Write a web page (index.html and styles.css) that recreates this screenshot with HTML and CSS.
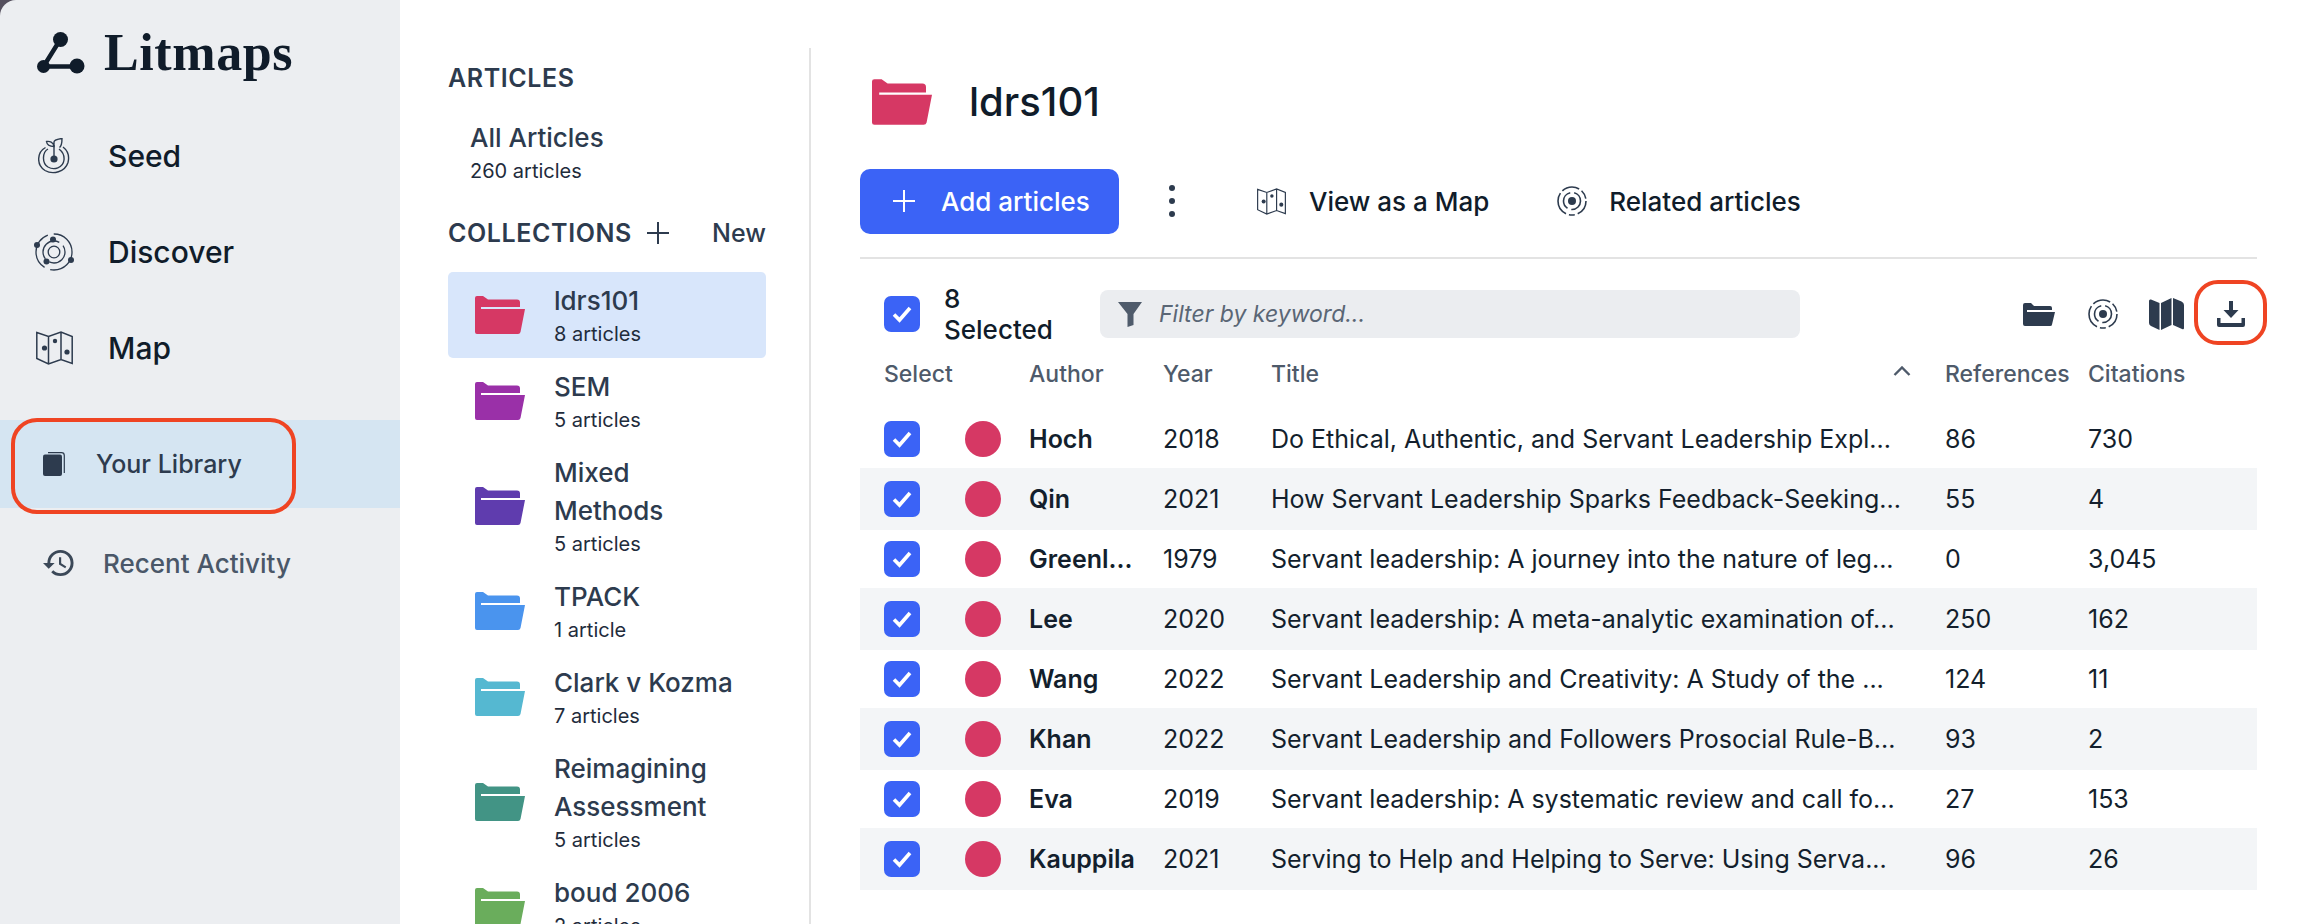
FILE: index.html
```html
<!DOCTYPE html>
<html lang="en">
<head>
<meta charset="utf-8">
<title>Litmaps</title>
<link rel="stylesheet" href="styles.css">
</head>
<body>
<svg class="defs" aria-hidden="true">
  <symbol id="folder" viewBox="0 0 50 38"><path d="M0 2Q0 0 2 0H8L13 3.5H42Q45 3.5 45 6.5V11H6V13H50L45.5 36Q45 38 43 38H2Q0 38 0 36Z"/></symbol>
  <symbol id="check" viewBox="0 0 36 36"><path d="M10 18.5l5.5 5.5L26 12" fill="none" stroke="#fff" stroke-width="3.6"/></symbol>
  <symbol id="related" viewBox="0 0 30 30"><circle cx="15" cy="15" r="4" fill="currentColor"/><circle cx="15" cy="15" r="8.5" fill="none" stroke="currentColor" stroke-width="1.6" stroke-dasharray="14 4 20 4"/><circle cx="15" cy="15" r="14" fill="none" stroke="currentColor" stroke-width="1.6" stroke-dasharray="16 3 6 3 24 3 18 3 9 3"/></symbol>
  <symbol id="map" viewBox="0 0 37 34"><path d="M.8 1.5 12.5 5.5 25 1l11.2 4.5v27L25 28.5l-12.5 4.5L.8 27.5ZM12.5 5.5V33M25 1v27.5" fill="none" stroke="currentColor" stroke-width="1.5"/><circle cx="8.5" cy="17" r="2.6" fill="currentColor"/><circle cx="19" cy="10" r="2.2" fill="currentColor"/><circle cx="31" cy="21" r="2.6" fill="currentColor"/></symbol>
</svg>
<div class="app">
  <aside class="sidebar">
    <div class="logo">
      <svg class="logo-icon" viewBox="0 0 48 42"><path d="M23 8 6.500 34.500H40" fill="none" stroke="currentColor" stroke-width="4.500"/><circle cx="23.500" cy="7.500" r="7.500"/><circle cx="6.500" cy="34.500" r="6.500"/><circle cx="40" cy="34" r="7.500"/></svg>
      <span class="logo-text">Litmaps</span>
    </div>
    <nav class="nav">
      <a class="nav-item"><span class="nav-ico"><svg class="ico-seed" viewBox="0 0 32 37"><circle cx="16" cy="21" r="3.600" fill="currentColor"/><path d="M16 21V8M10 12C4.500 15 3.500 26 10 30c6 3.500 15 1 16-7 .4-4-1-8-5-11M7.500 10.500C-1 15-2 28 7 33.500c8 4.500 20 1.500 23-8 1.500-6-.5-12-5-15.500" fill="none" stroke="currentColor" stroke-width="1.400" transform="translate(0 -1)"/><path d="M16 8.500C12 8.500 9 7 8.500 3.500c3-.5 7 .5 7.500 5ZM16 8V4c0-2 4-3 8-3.500 0 4-.5 7.500-2.500 9" fill="none" stroke="currentColor" stroke-width="1.400"/></svg></span>Seed</a>
      <a class="nav-item"><span class="nav-ico"><svg class="ico-discover" viewBox="0 0 40 38"><circle cx="20" cy="19" r="5.800" fill="none" stroke="currentColor" stroke-width="1.300"/><circle cx="20" cy="19" r="11" fill="none" stroke="currentColor" stroke-width="1.300" stroke-dasharray="22 5 30 5"/><circle cx="20" cy="19" r="18" fill="none" stroke="currentColor" stroke-width="1.300" stroke-dasharray="32 6 40 6 30 6"/><circle cx="19" cy="6.500" r="3" fill="currentColor"/><circle cx="3" cy="12" r="3" fill="currentColor"/><circle cx="37" cy="27" r="3" fill="currentColor"/><circle cx="12.500" cy="28.500" r="3" fill="currentColor"/></svg></span>Discover</a>
      <a class="nav-item"><span class="nav-ico"><svg class="ico-map" aria-hidden="true"><use href="#map"/></svg></span>Map</a>
    </nav>
    <a class="library"><svg class="ico-book" viewBox="0 0 22 24"><path d="M5 .7h13.500q2.800 0 2.800 2.800V21" fill="none" stroke="currentColor" stroke-width="1.200"/><path d="M2 2.500h15q2 0 2 2V22q0 2-2 2H2q-2 0-2-2V4.500q0-2 2-2Z"/></svg>Your Library</a>
    <a class="recent"><svg class="ico-history" viewBox="1 3 22 18"><path d="M13 3a9 9 0 0 0-9 9H1l3.890 3.890.07.140L9 12H6c0-3.870 3.130-7 7-7s7 3.130 7 7-3.130 7-7 7c-1.930 0-3.680-.790-4.940-2.060l-1.420 1.420A8.954 8.954 0 0 0 13 21a9 9 0 0 0 0-18zm-1 5v5l4.280 2.540.720-1.210-3.500-2.080V8H12z"/></svg>Recent Activity</a>
  </aside>

  <section class="collections">
    <h2 class="group-title">ARTICLES</h2>
    <div class="all">
      <div class="item-name">All Articles</div>
      <div class="item-sub">260 articles</div>
    </div>
    <div class="coll-head">
      <h2 class="group-title">COLLECTIONS</h2>
      <svg class="plus" viewBox="0 0 22 22"><path d="M11 0v22M0 11h22" fill="none" stroke="currentColor" stroke-width="2"/></svg>
      <span class="new">New</span>
    </div>
    <div class="coll-list">
      <a class="coll active"><svg class="coll-folder c-red"><use href="#folder"/></svg><div><div class="item-name">ldrs101</div><div class="item-sub">8 articles</div></div></a>
      <a class="coll"><svg class="coll-folder c-magenta"><use href="#folder"/></svg><div><div class="item-name">SEM</div><div class="item-sub">5 articles</div></div></a>
      <a class="coll"><svg class="coll-folder c-purple"><use href="#folder"/></svg><div><div class="item-name">Mixed<br>Methods</div><div class="item-sub">5 articles</div></div></a>
      <a class="coll"><svg class="coll-folder c-blue"><use href="#folder"/></svg><div><div class="item-name">TPACK</div><div class="item-sub">1 article</div></div></a>
      <a class="coll"><svg class="coll-folder c-cyan"><use href="#folder"/></svg><div><div class="item-name">Clark v Kozma</div><div class="item-sub">7 articles</div></div></a>
      <a class="coll"><svg class="coll-folder c-teal"><use href="#folder"/></svg><div><div class="item-name">Reimagining<br>Assessment</div><div class="item-sub">5 articles</div></div></a>
      <a class="coll"><svg class="coll-folder c-green"><use href="#folder"/></svg><div><div class="item-name">boud 2006</div><div class="item-sub">2 articles</div></div></a>
    </div>
  </section>

  <main class="main">
    <header class="title-row">
      <svg class="title-folder c-red"><use href="#folder"/></svg>
      <h1 class="title">ldrs101</h1>
    </header>
    <div class="actions">
      <button class="add"><svg class="add-plus" viewBox="0 0 22 22"><path d="M11 0v22M0 11h22" fill="none" stroke="currentColor" stroke-width="2"/></svg>Add articles</button>
      <span class="kebab"><i></i><i></i><i></i></span>
      <a class="action act-map"><svg class="act-ico-map"><use href="#map"/></svg>View as a Map</a>
      <a class="action act-rel"><svg class="act-ico"><use href="#related"/></svg>Related articles</a>
    </div>
    <div class="toolbar">
      <span class="cb"><svg><use href="#check"/></svg></span>
      <span class="selected">8 Selected</span>
      <div class="filter">
        <svg class="funnel" viewBox="0 0 24 25"><path d="M0 0h24L15.500 12v11l-6 2V12Z"/></svg>
        <span>Filter by keyword...</span>
      </div>
      <div class="tools">
        <svg class="tool-folder" viewBox="0 0 32 23"><path d="M0 2Q0 0 2 0H8L11 3H27Q29 3 29 5V7H4V9H32L29 21.500Q29 23 27 23H2Q0 23 0 21Z"/></svg>
        <svg class="tool-related"><use href="#related"/></svg>
        <svg class="tool-map" viewBox="0 0 35 32"><path d="M0 3Q0 1 2 1.500L10.500 5V32L2 28Q0 27 0 25ZM12 5 22.500 0V27L12 32ZM24 0 32.500 3.500Q35 4.500 35 7V30Q35 32 33 31L24 27Z"/></svg>
        <svg class="tool-dl" viewBox="0 0 28 26"><path d="M12 0h4v9h5.500l-7.500 8-7.500-8H12ZM0 17h3.500v5h21v-5H28v7q0 2-2 2H2q-2 0-2-2Z"/></svg>
      </div>
    </div>
    <div class="thead">
      <span>Select</span><span></span><span>Author</span><span>Year</span>
      <span class="th-title">Title<svg class="chev" viewBox="0 0 18 10"><path d="M1.500 9 9 1.500 16.500 9" fill="none" stroke="currentColor" stroke-width="2.400"/></svg></span>
      <span>References</span><span>Citations</span>
    </div>
    <div class="tbody">
      <div class="row"><span class="cb"><svg><use href="#check"/></svg></span><span class="dot"></span><b class="author">Hoch</b><span>2018</span><span>Do Ethical, Authentic, and Servant Leadership Expl...</span><span>86</span><span>730</span></div>
      <div class="row"><span class="cb"><svg><use href="#check"/></svg></span><span class="dot"></span><b class="author">Qin</b><span>2021</span><span>How Servant Leadership Sparks Feedback-Seeking...</span><span>55</span><span>4</span></div>
      <div class="row"><span class="cb"><svg><use href="#check"/></svg></span><span class="dot"></span><b class="author">Greenl...</b><span>1979</span><span>Servant leadership: A journey into the nature of leg...</span><span>0</span><span>3,045</span></div>
      <div class="row"><span class="cb"><svg><use href="#check"/></svg></span><span class="dot"></span><b class="author">Lee</b><span>2020</span><span>Servant leadership: A meta-analytic examination of...</span><span>250</span><span>162</span></div>
      <div class="row"><span class="cb"><svg><use href="#check"/></svg></span><span class="dot"></span><b class="author">Wang</b><span>2022</span><span>Servant Leadership and Creativity: A Study of the ...</span><span>124</span><span>11</span></div>
      <div class="row"><span class="cb"><svg><use href="#check"/></svg></span><span class="dot"></span><b class="author">Khan</b><span>2022</span><span>Servant Leadership and Followers Prosocial Rule-B...</span><span>93</span><span>2</span></div>
      <div class="row"><span class="cb"><svg><use href="#check"/></svg></span><span class="dot"></span><b class="author">Eva</b><span>2019</span><span>Servant leadership: A systematic review and call fo...</span><span>27</span><span>153</span></div>
      <div class="row"><span class="cb"><svg><use href="#check"/></svg></span><span class="dot"></span><b class="author">Kauppila</b><span>2021</span><span>Serving to Help and Helping to Serve: Using Serva...</span><span>96</span><span>26</span></div>
    </div>
  </main>
  <div class="mark mark-library"></div>
  <div class="mark mark-download"></div>
</div>
</body>
</html>
```
FILE: styles.css
```css
* { box-sizing: border-box; }
html, body { margin: 0; height: 100%; overflow: hidden; }
body { background: #55505e; font-family: Inter, "Liberation Sans", sans-serif; color: #101c2a; }
.defs { display: none; }
h1, h2 { margin: 0; font: inherit; }
svg { display: block; fill: currentColor; flex: none; }

.app { position: relative; display: flex; width: 2298px; height: 924px; overflow: hidden; background: #fff; }
.app::before { content: ""; position: absolute; left: 0; top: 0; width: 20px; height: 20px; background: #55505e; }

/* sidebar */
.sidebar { position: relative; width: 400px; flex: none; background: #eceef1; border-top-left-radius: 16px; padding-top: 30px; color: #101c2a; }
.logo { display: flex; align-items: center; gap: 19px; height: 46px; padding-left: 37px; color: #101c2a; }
.logo-icon { width: 48px; height: 42px; }
.logo-text { font-family: "Liberation Serif", serif; font-weight: 700; font-size: 52px; letter-spacing: .6px; line-height: 46px; }
.nav { margin-top: 32px; }
.nav-item { display: flex; align-items: center; height: 96px; font-size: 30px; font-weight: 500; }
.nav-ico { display: flex; justify-content: center; width: 108px; padding-right: 0; color: #2d3b4e; }
.ico-seed { width: 32px; height: 37px; }
.ico-discover { width: 40px; height: 38px; }
.ico-map { width: 37px; height: 34px; }
.library { display: flex; align-items: center; gap: 31px; height: 88px; margin-top: 24px; padding-left: 43px; background: #d5e5f2; color: #2d3b4e; font-size: 25px; font-weight: 500; }
.ico-book { width: 22px; height: 24px; }
.recent { display: flex; align-items: center; gap: 28px; height: 110px; padding-left: 43px; color: #4a5768; font-size: 26px; font-weight: 500; }
.ico-history { width: 32px; height: 30px; fill: #3b4858; }

/* collections */
.collections { width: 411px; flex: none; margin-top: 48px; padding: 15px 43px 0 48px; border-right: 2px solid #e3e3e3; color: #2d3b4e; }
.group-title { font-size: 25px; font-weight: 600; line-height: 30px; letter-spacing: .6px; }
.all { margin-top: 26px; padding-left: 22px; }
.item-name { font-size: 26px; font-weight: 500; line-height: 38px; color: #2d3b4e; }
.item-sub { font-size: 20px; line-height: 28px; color: #1f2c3c; }
.coll-head { display: flex; align-items: center; margin-top: 33px; }
.plus { width: 22px; height: 22px; margin-left: 15px; }
.new { margin-left: auto; font-size: 25px; font-weight: 500; line-height: 30px; }
.coll-list { margin-top: 24px; }
.coll { display: flex; align-items: center; gap: 29px; padding: 10px 0 10px 27px; border-radius: 5px; }
.coll.active { background: #d8e6fb; }
.coll-folder { width: 50px; height: 38px; }
.c-red { color: #d63864; }
.c-magenta { color: #9a30a8; }
.c-purple { color: #5f3cae; }
.c-blue { color: #4a94ee; }
.c-cyan { color: #55b8d1; }
.c-teal { color: #429485; }
.c-green { color: #6aad5c; }

/* main */
.main { width: 1397px; flex: none; margin-left: 49px; }
.title-row { display: flex; align-items: center; gap: 37px; height: 66px; margin-top: 69px; padding-left: 12px; }
.title-folder { width: 60px; height: 46px; }
.title { font-size: 40px; font-weight: 500; line-height: 66px; color: #101c2a; }
.actions { display: flex; align-items: center; height: 66px; margin-top: 33px; }
.add { display: flex; align-items: center; gap: 26px; width: 259px; height: 65px; padding: 0 0 0 33px; border: 0; border-radius: 10px; background: #3b63f6; color: #fff; font: 500 26px Inter, sans-serif; }
.add-plus { width: 22px; height: 22px; }
.kebab { display: flex; flex-direction: column; gap: 7px; margin-left: 50px; }
.kebab i { display: block; width: 6px; height: 6px; border-radius: 50%; background: #2d3b4e; }
.action { display: flex; align-items: center; font-size: 26px; font-weight: 500; color: #101c2a; }
.act-map { gap: 23px; margin-left: 82px; }
.act-rel { gap: 22px; margin-left: 68px; }
.act-ico-map { width: 29px; height: 27px; color: #2d3b4e; }
.act-ico { width: 30px; height: 30px; color: #2d3b4e; }
.toolbar { display: flex; align-items: center; gap: 24px; height: 80px; margin-top: 23px; padding: 32px 0 0 24px; border-top: 2px solid #e3e3e3; box-sizing: border-box; }
.cb { display: flex; width: 36px; height: 36px; border-radius: 7px; background: #3b63f6; }
.cb svg { width: 36px; height: 36px; }
.selected { width: 132px; font-size: 26px; font-weight: 500; }
.filter { display: flex; align-items: center; gap: 17px; width: 700px; height: 48px; padding-left: 18px; border-radius: 8px; background: #ebedf0; color: #5a6675; font-size: 23px; font-style: italic; }
.funnel { width: 24px; height: 25px; fill: #4f5b6b; }
.tools { display: flex; align-items: center; margin-left: auto; height: 48px; color: #2d3b4e; }
.tool-folder { width: 32px; height: 23px; margin-right: 33px; }
.tool-related { width: 30px; height: 30px; margin-right: 31px; }
.tool-map { width: 35px; height: 32px; margin-right: 33px; }
.tool-dl { width: 28px; height: 26px; margin-right: 12px; }
.thead, .row { display: grid; grid-template-columns: 81px 64px 134px 108px 674px 143px 1fr; align-items: center; padding-left: 24px; }
.thead { height: 40px; margin-top: 17px; margin-bottom: 15px; font-size: 23px; font-weight: 500; color: #4e5a6a; }
.th-title { display: flex; align-items: center; justify-content: space-between; padding-right: 34px; }
.chev { width: 18px; height: 10px; margin-top: -6px; }
.row { height: 60px; font-size: 25px; color: #131f2d; white-space: nowrap; }
.row:nth-child(even) { height: 62px; margin: -1px 0; background: #f3f5f7; }
.dot { width: 36px; height: 36px; border-radius: 50%; background: #d63864; }
.author { font-weight: 600; }

/* annotation outlines */
.mark { position: absolute; border: 4px solid #ef4423; }
.mark-library { left: 11px; top: 418px; width: 285px; height: 96px; border-radius: 26px; }
.mark-download { left: 2194px; top: 280px; width: 73px; height: 65px; border-radius: 24px; }
```
